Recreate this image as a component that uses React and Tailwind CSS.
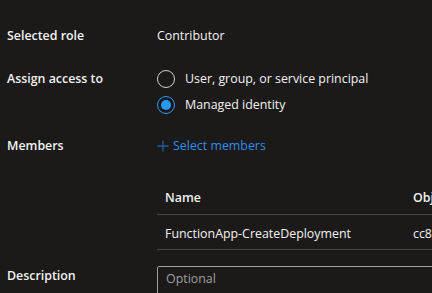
export default function App() {
  const font = { fontFamily: '"Open Sans", "Noto Sans", sans-serif' };
  return (
    <div className="w-[432px] h-[293px] overflow-hidden bg-[#1b1a19] text-[#f3f2f1] text-[12.4px] leading-[18px]" style={font}>
      <div className="pl-[7px] pt-[27px]">
        <div className="flex items-center h-[18px]">
          <div className="w-[150px] shrink-0 font-semibold">Selected role</div>
          <div>Contributor</div>
        </div>
        <div className="flex mt-[25px]">
          <div className="w-[150px] shrink-0 font-semibold h-[18px]">Assign access to</div>
          <div className="flex flex-col gap-[8px]">
            <div className="flex items-center h-[18px]">
              <span className="w-[18px] h-[18px] rounded-full border border-[#d2d0ce] shrink-0" />
              <span className="ml-[10px] whitespace-nowrap">User, group, or service principal</span>
            </div>
            <div className="flex items-center h-[18px]">
              <span className="w-[18px] h-[18px] rounded-full border border-[#2899f5] shrink-0 flex items-center justify-center">
                <span className="w-[10px] h-[10px] rounded-full bg-[#2899f5]" />
              </span>
              <span className="ml-[10px] whitespace-nowrap">Managed identity</span>
            </div>
          </div>
        </div>
        <div className="flex items-center mt-[23px] h-[18px]">
          <div className="w-[150px] shrink-0 font-semibold">Members</div>
          <div className="flex items-center text-[#2b8fe8]">
            <svg width="12" height="12" viewBox="0 0 12 12" className="mr-[4px]">
              <path d="M6 0.5V11.5M0.5 6H11.5" stroke="#1e5c9e" strokeWidth="1.3" />
            </svg>
            <span className="whitespace-nowrap">Select members</span>
          </div>
        </div>
        <div className="ml-[150px] mt-[26px] w-[400px]">
          <div className="flex h-[34px] items-center border-b border-[#484644] font-semibold">
            <div className="w-[256px] shrink-0 pl-[8px]">Name</div>
            <div className="whitespace-nowrap">Object ID</div>
          </div>
          <div className="flex h-[35px] pt-[3px] items-center border-b border-[#484644]">
            <div className="w-[256px] shrink-0 pl-[8px] whitespace-nowrap">FunctionApp-CreateDeployment</div>
            <div className="whitespace-nowrap">cc8a1f2e-4d3b</div>
          </div>
        </div>
        <div className="flex mt-[16px]">
          <div className="w-[150px] shrink-0 font-semibold pt-[1px]">Description</div>
          <div className="w-[400px] shrink-0 h-[60px] border border-[#a19f9d] rounded-[2px] pl-[8px] pt-[3px] text-[#a19f9d]">Optional</div>
        </div>
      </div>
    </div>
  );
}
